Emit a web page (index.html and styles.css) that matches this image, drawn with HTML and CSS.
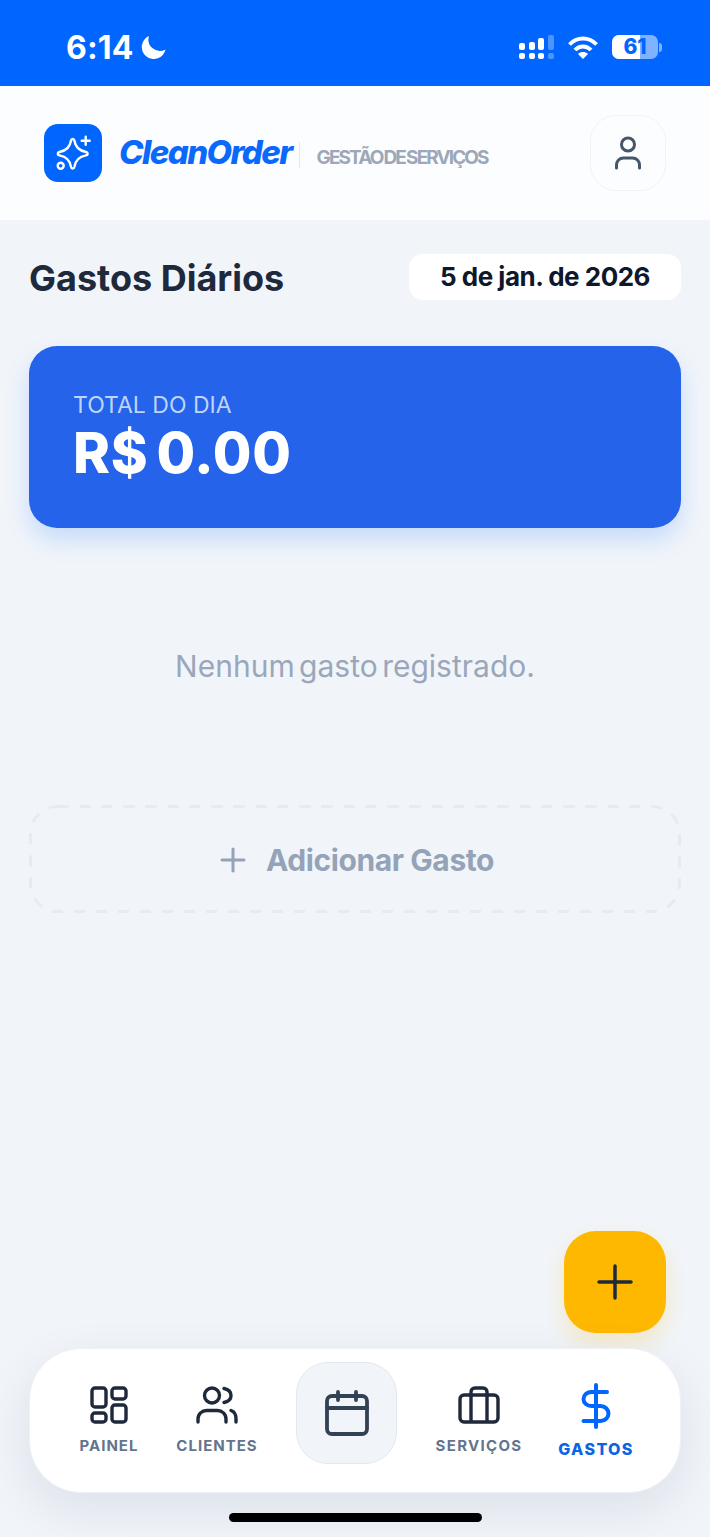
FILE: index.html
```html
<!DOCTYPE html>
<html lang="pt-BR">
<head>
  <meta charset="UTF-8">
  <meta name="viewport" content="width=device-width, initial-scale=1.0">
  <title>CleanOrder - Gastos</title>
  <link rel="stylesheet" href="styles.css">
</head>
<body>
  <!-- Status bar -->
  <div class="status-bar">
    <div class="status-left">
      <span class="clock">6:14</span>
      <svg class="moon" width="26" height="26" viewBox="0 0 26 26"><path d="M8 1A12 12 0 1 0 24.500 14.500 11.500 11.500 0 0 1 8 1Z" fill="#fff"/></svg>
    </div>
    <div class="status-right">
      <svg width="35" height="24" viewBox="0 0 35 24">
        <rect x="0" y="8" width="6" height="7" rx="2" fill="#fff"/><rect x="0" y="18" width="6" height="6" rx="2" fill="#fff"/>
        <rect x="10" y="7" width="6" height="8" rx="2" fill="#fff"/><rect x="10" y="18" width="6" height="6" rx="2" fill="#fff"/>
        <rect x="19" y="3" width="6" height="12" rx="2" fill="#fff"/><rect x="19" y="18" width="6" height="6" rx="2" fill="#fff"/>
        <rect x="29" y="0" width="6" height="15" rx="2" fill="#4d94ff"/><rect x="29" y="18" width="6" height="6" rx="2" fill="#4d94ff"/>
      </svg>
      <svg class="wifi" width="30" height="24" viewBox="0 0 30 24" fill="none" stroke="#fff" stroke-width="4">
        <path d="M1.500 9.500C9 1.500 21 1.500 28.500 9.500"/><path d="M7 15c4.500-4.800 11.500-4.800 16 0"/><path d="M15 24l-5-5c2.800-2.600 7.200-2.600 10 0Z" fill="#fff" stroke="none"/>
      </svg>
      <div class="battery">
        <div class="battery-body"><span class="battery-fill"></span><span class="battery-num">61</span></div>
        <span class="battery-tip"></span>
      </div>
    </div>
  </div>

  <!-- Header -->
  <header class="app-header">
    <div class="brand">
      <div class="brand-icon">
        <svg width="36" height="36" viewBox="0 0 36 36" fill="none" stroke="#fff" stroke-width="2.400" stroke-linecap="round" stroke-linejoin="round">
          <path d="M16 5.500C16.400 3.400 19 3.400 19.400 5.500C20.300 12 23.500 15.600 31 17C33.200 17.400 33.200 20 31 20.400C23.500 21.800 20.300 25.400 19.400 31.900C19 34 16.400 34 16 31.900C15.100 25.400 11.900 21.800 4.400 20.400C2.200 20 2.200 17.400 4.400 17C11.900 15.600 15.100 12 16 5.500Z"/>
          <path d="M30.700 1.700v8M26.700 5.700h8"/>
          <circle cx="5.700" cy="30.700" r="3"/>
        </svg>
      </div>
      <span class="brand-name">CleanOrder</span>
      <span class="brand-sep"></span>
      <span class="brand-sub">GESTÃO DE SERVIÇOS</span>
    </div>
    <button class="profile-btn">
      <svg width="28" height="34" viewBox="0 0 28 34" fill="none" stroke="#475569" stroke-width="3" stroke-linecap="round">
        <circle cx="14" cy="8.500" r="6.500"/>
        <path d="M2.500 32v-3c0-4 3-7 7-7h9c4 0 7 3 7 7v3"/>
      </svg>
    </button>
  </header>

  <main class="content">
    <div class="page-head">
      <h1>Gastos Diários</h1>
      <div class="date-pill">5 de jan. de 2026</div>
    </div>

    <section class="total-card">
      <div class="total-label">TOTAL DO DIA</div>
      <div class="total-value">R$ 0.00</div>
    </section>

    <p class="empty">Nenhum gasto registrado.</p>

    <button class="add-row">
      <svg class="add-dash" width="652" height="108" viewBox="0 0 652 108" fill="none" stroke="#e6ebf1" stroke-width="3" stroke-dasharray="11 11"><rect x="1.500" y="1.500" width="649" height="105" rx="27"/></svg>
      <svg width="26" height="26" viewBox="0 0 26 26" stroke="#94a3b8" stroke-width="3" stroke-linecap="round"><path d="M13 2v22M2 13h22"/></svg>
      <span>Adicionar Gasto</span>
    </button>
  </main>

  <button class="fab">
    <svg width="36" height="36" viewBox="0 0 36 36" stroke="#1e293b" stroke-width="3.500" stroke-linecap="round"><path d="M18 2v32M2 18h32"/></svg>
  </button>

  <!-- Bottom nav -->
  <nav class="bottom-nav">
    <a class="nav-item nav-painel">
      <svg width="38" height="38" viewBox="0 0 38 38" fill="none" stroke="#1e293b" stroke-width="3.400" stroke-linejoin="round">
        <rect x="2" y="2" width="14" height="19" rx="3"/><rect x="22" y="2" width="14" height="11" rx="3"/>
        <rect x="2" y="27" width="14" height="9" rx="3"/><rect x="22" y="19" width="14" height="17" rx="3"/>
      </svg>
      <span>PAINEL</span>
    </a>
    <a class="nav-item nav-clientes">
      <svg width="42" height="38" viewBox="0 0 42 38" fill="none" stroke="#1e293b" stroke-width="3.400" stroke-linecap="round">
        <circle cx="16" cy="9.500" r="7.500"/>
        <path d="M2 36v-3c0-5 4-8.500 8.500-8.500h11c4.500 0 8.500 3.500 8.500 8.500v3"/>
        <path d="M28 2.500c5 1 7 4 7 7s-2 6-7 7"/>
        <path d="M35 24.500c3 1 5 4 5 8v3.500"/>
      </svg>
      <span>CLIENTES</span>
    </a>
    <a class="nav-center">
      <svg width="44" height="46" viewBox="0 0 44 46" fill="none" stroke="#334155" stroke-width="3.800" stroke-linecap="round" stroke-linejoin="round">
        <rect x="2" y="6" width="40" height="38" rx="5"/>
        <path d="M2 18h40M13 2v8M31 2v8"/>
      </svg>
    </a>
    <a class="nav-item nav-servicos">
      <svg width="42" height="38" viewBox="0 0 42 38" fill="none" stroke="#1e293b" stroke-width="3.400" stroke-linejoin="round">
        <rect x="2" y="9" width="38" height="27" rx="4"/>
        <path d="M13 36V6c0-2 1.500-4 4-4h8c2.500 0 4 2 4 4v30"/>
      </svg>
      <span>SERVIÇOS</span>
    </a>
    <a class="nav-item nav-gastos active">
      <svg width="30" height="46" viewBox="0 0 30 46" fill="none" stroke="#0066ff" stroke-width="4" stroke-linecap="round">
        <path d="M15 2v42"/>
        <path d="M26 9H10.500C6 9 2.500 12 2.500 16s3.500 7 8 7h9c4.500 0 8 3.500 8 7.500s-3.500 7.500-8 7.500H2.500"/>
      </svg>
      <span>GASTOS</span>
    </a>
  </nav>
  <div class="home-bar"></div>
</body>
</html>
```

FILE: styles.css
```css
* {
  box-sizing: border-box;
}

html, body {
  height: 1537px;
}

body {
  margin: 0;
  position: relative;
  overflow: hidden;
  display: flex;
  flex-direction: column;
  background: #f1f5fa;
  font-family: Inter, "Open Sans", sans-serif;
  color: #1e293b;
}

button {
  font-family: inherit;
  cursor: pointer;
}

/* status bar */
.status-bar {
  height: 86px;
  flex: none;
  background: #0066ff;
  display: flex;
  justify-content: space-between;
  align-items: flex-start;
  padding: 33px 48px 0 66px;
  color: #fff;
}

.status-left {
  display: flex;
  align-items: center;
  gap: 7px;
}

.clock {
  font-size: 32px;
  line-height: 30px;
  font-weight: 700;
  letter-spacing: 0.2px;
}

.status-right {
  display: flex;
  align-items: center;
  gap: 14px;
  margin-top: 2px;
}

.battery {
  display: flex;
  align-items: center;
  gap: 1px;
}

.battery-body {
  position: relative;
  width: 46px;
  height: 24px;
  border-radius: 7px;
  background: #80b3ff;
  overflow: hidden;
  text-align: center;
}

.battery-fill {
  position: absolute;
  left: 0;
  top: 0;
  bottom: 0;
  width: 28px;
  background: #fff;
}

.battery-num {
  position: relative;
  font-size: 21px;
  line-height: 24px;
  font-weight: 800;
  color: #0066ff;
}

.battery-tip {
  width: 3px;
  height: 9px;
  border-radius: 0 3px 3px 0;
  background: #80b3ff;
}

/* header */
.app-header {
  height: 134px;
  flex: none;
  background: #fcfdff;
  display: flex;
  justify-content: space-between;
  align-items: center;
  padding: 0 44px;
}

.brand {
  display: flex;
  align-items: center;
}

.brand-icon {
  width: 58px;
  height: 58px;
  border-radius: 14px;
  background: #0066ff;
  display: flex;
  align-items: center;
  justify-content: center;
  margin-right: 17px;
}

.brand-name {
  font-size: 33px;
  font-weight: 800;
  font-style: italic;
  letter-spacing: -1.6px;
  color: #0a69fa;
  margin-bottom: 2px;
}

.brand-sep {
  width: 1px;
  height: 26px;
  background: #e2e8f0;
  margin: 4px 17px 0 7px;
}

.brand-sub {
  font-size: 19px;
  font-weight: 700;
  letter-spacing: -1.9px;
  word-spacing: -1.5px;
  color: #9ca8ba;
  margin-top: 8px;
}

.profile-btn {
  width: 76px;
  height: 76px;
  border-radius: 26px;
  background: #fcfdff;
  border: 1px solid #f0f3f7;
  padding: 0;
  display: flex;
  align-items: center;
  justify-content: center;
}

/* content */
.content {
  padding: 34px 29px 0;
}

.page-head {
  display: flex;
  justify-content: space-between;
  align-items: center;
  height: 46px;
}

.page-head h1 {
  margin: 0 0 -2px;
  font-size: 36px;
  font-weight: 700;
  color: #1e293b;
}

.date-pill {
  width: 272px;
  height: 46px;
  padding-bottom: 2px;
  border-radius: 14px;
  background: #fff;
  display: flex;
  align-items: center;
  justify-content: center;
  font-size: 26px;
  font-weight: 700;
  letter-spacing: -0.5px;
  color: #0f172a;
}

.total-card {
  margin-top: 46px;
  height: 182px;
  border-radius: 28px;
  background: #2563eb;
  padding: 44px 44px 0;
  color: #fff;
  box-shadow: 0 12px 24px rgba(0, 102, 255, 0.18);
}

.total-label {
  font-size: 23px;
  line-height: 30px;
  font-weight: 400;
  color: #bfd4f9;
}

.total-value {
  font-size: 56px;
  line-height: 66px;
  font-weight: 800;
  letter-spacing: 0.7px;
  word-spacing: -5px;
}

.empty {
  margin: 119px 0 0;
  text-align: center;
  font-size: 30px;
  line-height: 38px;
  font-weight: 400;
  word-spacing: -4px;
  color: #9aa7ba;
}

.add-row {
  position: relative;
  margin-top: 120px;
  width: 100%;
  height: 108px;
  padding: 2px 0 0 4px;
  background: none;
  border: none;
  display: flex;
  align-items: center;
  justify-content: center;
  gap: 20px;
  font-size: 30px;
  font-weight: 700;
  letter-spacing: -0.4px;
  color: #94a3b8;
}

.add-dash {
  position: absolute;
  left: 0;
  top: 0;
}

/* floating stuff */
.fab {
  position: absolute;
  left: 564px;
  top: 1231px;
  width: 102px;
  height: 102px;
  border-radius: 32px;
  border: none;
  padding: 0;
  background: #ffb800;
  display: flex;
  align-items: center;
  justify-content: center;
  box-shadow: 0 10px 24px rgba(255, 184, 0, 0.22);
}

.bottom-nav {
  position: absolute;
  left: 29px;
  top: 1348px;
  width: 652px;
  height: 145px;
  border-radius: 52px;
  background: #fff;
  border: 1px solid #eef2f7;
  box-shadow: 0 16px 50px rgba(15, 23, 42, 0.09);
  display: flex;
  align-items: flex-start;
}

.nav-item {
  display: flex;
  flex-direction: column;
  align-items: center;
  gap: 13px;
  font-size: 15px;
  line-height: 18px;
  font-weight: 700;
  letter-spacing: 1px;
  color: #64748b;
  padding-top: 37px;
}

.nav-painel {
  width: 108px;
  margin-left: 25px;
}

.nav-clientes {
  width: 108px;
}

.nav-center {
  width: 101px;
  height: 102px;
  margin: 13px 26px 0 25px;
  border-radius: 32px;
  background: #f1f5fa;
  border: 1px solid #e2e8f0;
  display: flex;
  align-items: center;
  justify-content: center;
}

.nav-servicos {
  width: 108px;
  margin-left: 2px;
  letter-spacing: 1.3px;
}

.nav-gastos {
  width: 104px;
  margin-left: 11px;
  padding-top: 34px;
  gap: 11px;
}

.nav-item.active {
  color: #0b63e5;
  font-size: 16px;
  font-weight: 800;
  letter-spacing: 1.4px;
}

.home-bar {
  position: absolute;
  left: 229px;
  top: 1513px;
  width: 253px;
  height: 9px;
  border-radius: 5px;
  background: #000;
}
```
